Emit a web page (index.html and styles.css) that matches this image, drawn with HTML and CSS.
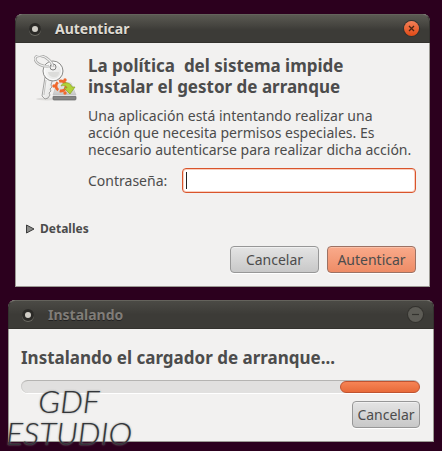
FILE: index.html
```html
<!DOCTYPE html>
<html lang="es">
	<head>
		<meta charset="UTF-8">
		<title>Autenticar</title>
		<link rel="stylesheet" href="styles.css">
	</head>
	<body>
		<div class="window auth">
			<div class="titlebar">
				<span class="app-dot"></span>
				<span class="title">Autenticar</span>
				<button class="win-btn close" type="button" aria-label="Cerrar">
					<svg width="15" height="15" viewBox="0 0 15 15"><path d="M5 5l5 5M10 5l-5 5" stroke="#4a2413" stroke-width="1.3" fill="none"/></svg>
				</button>
			</div>
			<form class="auth-body">
				<div class="message">
					<!-- llaves + disco -->
					<svg class="keys" width="44" height="46" viewBox="0 0 44 46">
						<defs>
							<linearGradient id="metal" x1="0" y1="0" x2="1" y2="1">
								<stop offset="0" stop-color="#ffffff"/>
								<stop offset="1" stop-color="#dededc"/>
							</linearGradient>
							<linearGradient id="disk" x1="0" y1="0" x2="0" y2="1">
								<stop offset="0" stop-color="#f0f0f0"/>
								<stop offset="1" stop-color="#c6c6c6"/>
							</linearGradient>
						</defs>
						<ellipse cx="13" cy="44" rx="11" ry="1.5" fill="#dddcda"/>
						<path d="M11 22l-3 19 3 3 3-1 2-3-1-2 2-2-1-2 2-2-1-2 2-7z" fill="url(#metal)" stroke="#8d8d8b" stroke-width=".8"/>
						<path d="M12 25l-2 15" stroke="#c4c4c2" fill="none"/>
						<circle cx="19" cy="16" r="10" fill="url(#metal)" stroke="#8d8d8b"/>
						<circle cx="19" cy="16" r="8.500" fill="none" stroke="#fff"/>
						<path d="M14 17h11c0 3-2 5-5 5s-6-2-6-5z" fill="#dcdcda"/>
						<circle cx="19" cy="12" r="3" fill="#f2f1f0" stroke="#808080"/>
						<path d="M1 4c1-5 9-4 14 1 3 3 4 5 4 7" fill="none" stroke="#a5a5a3" stroke-width="2.600"/>
						<path d="M1 4c1 5 8 8 14 7" fill="none" stroke="#a5a5a3" stroke-width="2.600"/>
						<path d="M1 4c1-5 9-4 14 1 3 3 4 5 4 7M1 4c1 5 8 8 14 7" fill="none" stroke="#f0f0f0" stroke-width="1.200"/>
						<path d="M23 28h14l5 12H19z" fill="url(#disk)" stroke="#c2c2c2" stroke-width=".7"/>
						<rect x="19" y="41" width="23" height="4" rx="1" fill="#858585" stroke="#656565" stroke-width=".7"/>
						<path d="M19 40.500h23" stroke="#dedede"/>
						<circle cx="27" cy="31" r="5" fill="none" stroke="#f0682c" stroke-width="2.800" stroke-dasharray="9 1.500"/>
						<circle cx="20" cy="31" r="1.700" fill="#f0682c"/>
						<circle cx="31" cy="25" r="1.700" fill="#f0682c"/>
						<circle cx="31" cy="38" r="1.700" fill="#f0682c"/>
						<path d="M27 31c1-4 9-5 11 1h3l-5 7-6-6h3c0-2-3-3-6-2z" fill="#b2d238" stroke="#86a52a" stroke-width=".7"/>
					</svg>
					<div class="message-text">
						<h1>La política&nbsp; del sistema impide<br>instalar el gestor de arranque</h1>
						<p>Una aplicación está intentando realizar una<br>acción que necesita permisos especiales. Es<br>necesario autenticarse para realizar dicha acción.</p>
						<div class="field">
							<label for="pass">Contraseña:</label>
							<span class="entry">
								<input id="pass" type="password">
								<span class="caret"></span>
							</span>
						</div>
					</div>
				</div>
				<button class="details" type="button">
					<svg width="9" height="10" viewBox="0 0 9 10"><path d="M.5 1v8L8 5z" fill="#8c8c8a" stroke="#3c3c3c"/></svg>
					Detalles
				</button>
				<div class="actions">
					<button class="btn" type="button">Cancelar</button>
					<button class="btn primary" type="button">Autenticar</button>
				</div>
			</form>
		</div>

		<div class="window install">
			<div class="titlebar inactive">
				<span class="app-dot"></span>
				<span class="title">Instalando</span>
				<button class="win-btn minimize" type="button" aria-label="Minimizar">
					<svg width="15" height="15" viewBox="0 0 15 15"><path d="M4 7.500h7" stroke="#33322e" stroke-width="1.200"/></svg>
				</button>
			</div>
			<div class="install-body">
				<h2>Instalando el cargador de arranque...</h2>
				<div class="progress"><div class="progress-block"></div></div>
				<div class="actions">
					<button class="btn narrow" type="button">Cancelar</button>
				</div>
			</div>
			<div class="watermark">GDF<br>ESTUDIO</div>
		</div>
	</body>
</html>
```
FILE: styles.css
```css
*{
	box-sizing: border-box;
	margin: 0;
	padding: 0;
}
body{
	background: #2c001e;
	padding: 14px 8px 9px;
	font-family: "Noto Sans", "Open Sans", sans-serif;
	font-size: 14px;
	line-height: 17px;
	color: #4c4c4c;
}
button, input{
	font: inherit;
	color: inherit;
}
.window{
	background: #f2f1f0;
	border: 1px solid #9c9a94;
	border-top: 0;
	border-radius: 7px 7px 0 0;
	position: relative;
}
.auth{
	margin: 0 4px 13px 7px;
}

/* barra de título */
.titlebar{
	display: flex;
	align-items: center;
	height: 29px;
	margin: 0 -1px;
	padding: 0 10px 0 13px;
	background: linear-gradient(#5a5952, #45443f 40%, #3c3b37 55%, #3c3b37);
	border: 1px solid #33322e;
	border-top-color: #64635c;
	border-radius: 7px 7px 0 0;
	color: #dfdbd2;
	font-weight: bold;
}
.title{
	flex: 1;
	text-shadow: 0 1px 0 #222;
}
.app-dot{
	width: 12px;
	height: 12px;
	margin-right: 14px;
	border: 3px solid #2b2a27;
	border-radius: 50%;
	background: #d0cdc6;
	box-shadow: 0 1px 0 #6a6962;
}
.inactive{
	background: linear-gradient(#4b4a45, #3c3b37 50%, #3c3b37);
	color: #807d78;
}
.win-btn{
	display: block;
	width: 15px;
	height: 15px;
	border: 0;
	border-radius: 50%;
}
.win-btn svg{
	display: block;
}
.close{
	background: linear-gradient(#f58058, #df4a16);
	box-shadow: 0 0 0 1px #33322e;
}
.minimize{
	background: #5d5c56;
	box-shadow: 0 0 0 1px #33322e;
}

/* autenticación */
.auth-body{
	padding: 12px 13px 13px 10px;
}
.message{
	display: flex;
	gap: 10px;
	padding-left: 8px;
}
.keys{
	flex: none;
}
.message-text{
	flex: 1;
	white-space: nowrap;
}
h1, h2{
	font-size: 17px;
	line-height: 21px;
}
.message-text p{
	margin: 10px 0;
}
.field{
	display: flex;
	align-items: center;
	gap: 12px;
}
.field label{
	width: 82px;
}
.entry{
	flex: 1;
	position: relative;
}
.entry input{
	display: block;
	width: 100%;
	height: 25px;
	padding: 0 6px;
	background: #fff;
	border: 1px solid #d9542b;
	border-radius: 4px;
	box-shadow: inset 0 0 0 1px #f9cfbf;
	outline: none;
}
.caret{
	position: absolute;
	left: 4px;
	top: 4px;
	width: 1px;
	height: 17px;
	background: #222;
}
.details{
	display: flex;
	align-items: center;
	gap: 5px;
	margin: 27px 0 9px;
	border: 0;
	background: none;
	font-size: 12px;
	font-weight: bold;
}
.actions{
	display: flex;
	justify-content: flex-end;
	gap: 8px;
}
.btn{
	width: 89px;
	height: 27px;
	border: 1px solid #979797;
	border-radius: 4px;
	background: linear-gradient(#e4e4e4, #c8c8c8);
	box-shadow: inset 0 1px 0 #f0f0f0, 0 1px 0 #fff;
}
.primary{
	border-color: #9c7264;
	background: linear-gradient(#f9aa8b, #ee8c66);
	box-shadow: inset 0 1px 0 #fbc0a8, 0 1px 0 #fff;
}
.narrow{
	width: 68px;
}

/* instalación */
.install-body{
	padding: 18px 13px 13px 12px;
}
.progress{
	display: flex;
	justify-content: flex-end;
	height: 13px;
	margin: 12px 0 8px;
	border-top: 1px solid #b5b4b2;
	border-radius: 7px;
	background: #e1e0df;
	box-shadow: 0 1px 0 #fff, inset 1px 0 0 #cfcecc;
}
.progress-block{
	width: 20%;
	border: 1px solid #bf5330;
	border-radius: 6px;
	background: linear-gradient(#f68455, #e86a39);
}
.watermark{
	position: absolute;
	left: -3px;
	bottom: -8px;
	font-family: Lato, sans-serif;
	font-size: 32px;
	font-style: italic;
	font-weight: 300;
	line-height: 32px;
	text-align: center;
	color: #333639;
	text-shadow: 0 0 2px #888;
}
```
